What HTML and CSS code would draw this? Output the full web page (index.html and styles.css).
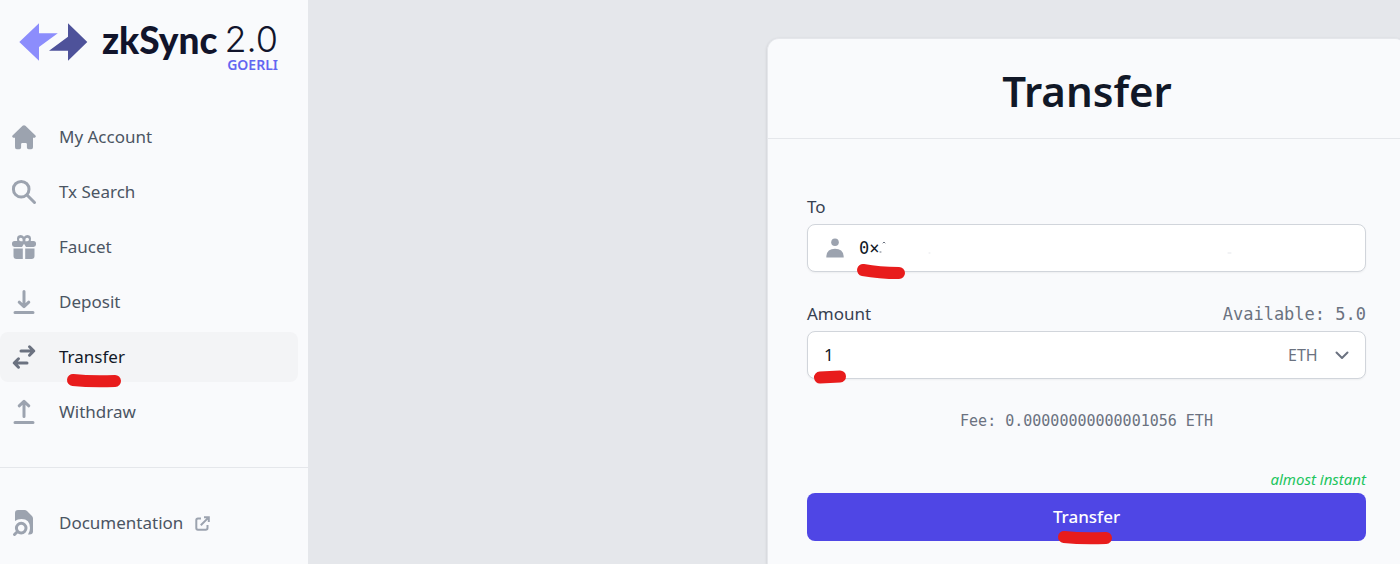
FILE: index.html
```html
<!DOCTYPE html>
<html lang="en">
<head>
  <meta charset="UTF-8" />
  <meta name="viewport" content="width=device-width, initial-scale=1.0"/>
  <title>zkSync 2.0 - Transfer</title>
  <link rel="stylesheet" href="styles.css">
</head>
<body>
  <aside class="sidebar">
    <a class="logo" href="#">
      <svg class="logo-mark" viewBox="0 0 69 38" aria-hidden="true">
        <path fill="#8c8dfc" d="M0.3 19L20 0.3V10.3H38.8L20 24V37.7Z"/>
        <path fill="#4e529a" d="M68.3 19L49 0.3V13.7L30 27.7H49V37.7Z"/>
      </svg>
      <span class="logo-text">
        <span class="logo-name">zkSync</span><span class="logo-version">2.0</span>
        <span class="network">GOERLI</span>
      </span>
    </a>

    <nav class="menu">
      <a class="item" href="#">
        <svg class="icon" viewBox="0 0 24 24"><path d="M10.6 0.8Q12-0.5 13.4 0.8L23.5 10.6Q24.6 12.2 22.8 12.8H21V22.3Q21 24.2 19.2 24.2H16.6Q14.9 24.2 14.9 22.5V19.2Q14.9 18 13.7 18H10.3Q9.1 18 9.1 19.2V22.5Q9.1 24.2 7.4 24.2H4.8Q3 24.2 3 22.3V12.8H1.2Q-0.6 12.2 0.5 10.6Z"/></svg>
        My Account
      </a>
      <a class="item" href="#">
        <svg class="icon line" viewBox="0 0 24 24"><circle cx="9.2" cy="9.2" r="7.8"/><path d="M15 15L22.5 22.5"/></svg>
        Tx Search
      </a>
      <a class="item" href="#">
        <svg class="icon" viewBox="0 0 24 24"><path fill-rule="evenodd" d="M5.2 6Q4 0 8.6 0Q10.6 0 12 1.8Q13.4 0 15.4 0Q20 0 18.8 6H21.5Q24 6 24 8.5V9.6Q24 12 21.5 12H14L12 8.8L10 12H2.5Q0 12 0 9.6V8.5Q0 6 2.5 6ZM8.8 2.7A1.8 1.8 0 1 0 8.8 6.3H10.6V4.5Q10.6 2.7 8.8 2.7ZM15.2 2.7Q13.4 2.7 13.4 4.5V6.3H15.2A1.8 1.8 0 1 0 15.2 2.7Z"/><path d="M1.5 13.5H10.8V24H4.5Q1.5 24 1.5 21ZM13.2 13.5H22.5V21Q22.5 24 19.5 24H13.2Z"/></svg>
        Faucet
      </a>
      <a class="item" href="#">
        <svg class="icon line" viewBox="0 0 24 24"><path d="M12 1.5V16M7.2 12.2L12 16.7L16.8 12.2M3 22.5H21"/></svg>
        Deposit
      </a>
      <a class="item active" href="#">
        <svg class="icon line" viewBox="0 0 24 24"><path d="M9 6H21.5M17.5 1.8L21.8 6L17.5 10.2M15 18H2.5M6.5 13.8L2.2 18L6.5 22.2"/></svg>
        Transfer
        <svg class="mark" viewBox="0 0 56 16"><path d="M7 7Q25 9 49 8"/></svg>
      </a>
      <a class="item" href="#">
        <svg class="icon line" viewBox="0 0 24 24"><path d="M12 16.5V2M7.2 5.8L12 1.3L16.8 5.8M3 22.5H21"/></svg>
        Withdraw
      </a>
    </nav>

    <nav class="menu docs">
      <a class="item" href="#">
        <svg class="icon" viewBox="0 0 24 28"><path d="M3 11V4Q3 1 6 1H12.5Q14 1 15 2L20 7Q21 8 21 9.5V22.5Q21 25.5 17.5 25.5H16Q18 22.5 18 19Q18 10 9.5 10Q5.5 10 3 12Z"/><path class="ring" d="M5.5 22.5L2.5 25.5M9.2 14.3A4.8 4.8 0 1 1 9.2 23.9A4.8 4.8 0 1 1 9.2 14.3Z"/></svg>
        Documentation
        <svg class="external" viewBox="0 0 15 15"><path d="M6 2.5H3Q1.3 2.5 1.3 4.2V12Q1.3 13.7 3 13.7H10.8Q12.5 13.7 12.5 12V9M9 1.2H13.8V6M13.4 1.6L5.8 9.2"/></svg>
      </a>
    </nav>
  </aside>

  <main class="content">
    <section class="card">
      <header class="card-header">
        <h1>Transfer</h1>
      </header>

      <form class="form">
        <div class="field">
          <label for="to">To</label>
          <div class="box">
            <svg class="person" viewBox="0 0 18 20"><circle cx="9" cy="4.2" r="3.8"/><path d="M0.3 19.5Q0.3 10.8 9 10.8Q17.7 10.8 17.7 19.5Z"/></svg>
            <input class="address" id="to" type="text" value="0×">
            <svg class="mark mark-to" viewBox="0 0 56 20">
              <path d="M10 7Q26 10 46 10"/>
              <path class="speck" d="M27-11H28M30-20L31-21L32-20"/>
              <path class="speck faint" d="M375-10H378M76-10H77"/>
            </svg>
          </div>
        </div>

        <div class="field">
          <div class="label-row">
            <label for="amount">Amount</label>
            <span class="available">Available: 5.0</span>
          </div>
          <div class="box">
            <input id="amount" type="text" value="1">
            <select class="token" aria-label="Token">
              <option>ETH</option>
            </select>
            <svg class="chevron" viewBox="0 0 14 9"><path d="M1.5 1.5L7 7L12.5 1.5"/></svg>
            <svg class="mark mark-amount" viewBox="0 0 36 16"><path d="M8 8.5L28 7.5"/></svg>
          </div>
        </div>

        <p class="fee">Fee: 0.00000000000001056 ETH</p>

        <p class="speed">almost instant</p>
        <button class="submit" type="button">
          Transfer
          <svg class="mark mark-submit" viewBox="0 0 56 16"><path d="M7 7Q25 9 49 8"/></svg>
        </button>
      </form>
    </section>
  </main>
</body>
</html>
```

FILE: styles.css
```css
* { box-sizing: border-box; }
body { margin: 0; display: flex; min-height: 100vh; background: #e5e7eb; color: #4b5563; font: 17px/24px "Noto Sans", sans-serif; }
h1, p { margin: 0; }

/* Sidebar */
.sidebar { flex: 0 0 308px; background: #f9fafc; }
.logo { display: flex; align-items: flex-start; gap: 14px; height: 112px; padding: 23px 30px 0 19px; text-decoration: none; color: #11142b; }
.logo-mark { width: 69px; height: 38px; flex: none; }
.logo-text { flex: 1; display: flex; flex-wrap: wrap; justify-content: space-between; line-height: 33px; }
.logo-name { font-family: Lato, sans-serif; font-size: 37px; font-weight: 900; }
.logo-version { font-family: Inter, sans-serif; font-size: 36px; font-weight: 300; }
.network { width: 100%; text-align: right; font-size: 14px; line-height: 18px; font-weight: 600; color: #6366f1; }

.menu { display: flex; flex-direction: column; gap: 5px; padding-right: 10px; }
.docs { margin-top: 30px; padding-top: 30px; border-top: 1px solid #e5e7eb; padding-right: 0; }
.item { position: relative; display: flex; align-items: center; height: 50px; padding-left: 12px; border-radius: 8px; color: #4b5563; text-decoration: none; }
.active { background: #f3f4f6; color: #111827; }
.icon { width: 24px; height: 24px; margin-right: 23px; fill: #9ca3af; overflow: visible; }
.line { fill: none; stroke: #9ca3af; stroke-width: 3; stroke-linecap: round; stroke-linejoin: round; }
.active .icon { stroke: #6b7280; }
.ring { fill: none; stroke: #9ca3af; stroke-width: 3; stroke-linecap: round; }
.docs .icon { height: 28px; }
.external { width: 15px; height: 15px; margin-left: 12px; fill: none; stroke: #9ca3af; stroke-width: 2; }

/* Transfer card */
.content { flex: 1; display: flex; justify-content: flex-end; height: 100vh; padding-top: 38px; overflow: hidden; }
.card { width: 640px; margin-right: -7px; background: #f9fafc; border: 1px solid #e5e7eb; border-bottom: 0; border-radius: 12px 12px 0 0; box-shadow: 0 1px 3px rgba(0, 0, 0, 0.15); }
.card-header { display: flex; align-items: center; justify-content: center; height: 100px; padding-top: 4px; border-bottom: 1px solid #e5e7eb; }
h1 { font-size: 42px; line-height: 48px; font-weight: 600; color: #111827; }
.form { padding: 56px 40px 0 39px; }
.field { display: flex; flex-direction: column; gap: 5px; margin-bottom: 30px; }
.field label { color: #374151; }
.label-row { display: flex; justify-content: space-between; }
.available { font-family: "DejaVu Sans Mono", monospace; color: #6b7280; }
.box { position: relative; display: flex; align-items: center; height: 48px; padding: 0 16px; background: #fff; border: 1px solid #d1d5db; border-radius: 8px; box-shadow: 0 1px 2px rgba(0, 0, 0, 0.05); }
.person { width: 18px; height: 20px; margin: 0 15px 0 2px; fill: #9ca3af; }
input { flex: 1; min-width: 0; padding: 0; border: 0; outline: 0; background: none; font: inherit; color: #111827; }
.address { font-family: "DejaVu Sans Mono", monospace; }
.token { appearance: none; padding: 0; width: 47px; border: 0; background: none; font: inherit; font-size: 16px; color: #6b7280; }
.chevron { width: 14px; height: 9px; fill: none; stroke: #6b7280; stroke-width: 2; stroke-linecap: round; stroke-linejoin: round; pointer-events: none; }
.fee { text-align: center; font-family: "DejaVu Sans Mono", monospace; font-size: 15px; color: #6b7280; }
.speed { margin: 34px 0 2px; text-align: right; font-size: 15px; font-style: italic; color: #22c55e; }
.submit { position: relative; display: block; width: 100%; height: 48px; padding: 0; border: 0; border-radius: 8px; background: #4f46e5; color: #fff; font: inherit; font-weight: 500; }

/* Red marker strokes */
.mark { position: absolute; left: 66px; top: 41px; width: 56px; height: 16px; overflow: visible; fill: none; stroke: #e81c1c; stroke-width: 12; stroke-linecap: round; z-index: 1; pointer-events: none; }
.mark-to { left: 45px; top: 38px; height: 20px; }
.mark-amount { left: 4px; top: 37px; width: 36px; }
.mark-submit { left: 250px; top: 37px; }
.speck { stroke: #6b7280; stroke-width: 1; }
.faint { stroke: #e5e7eb; }
```
